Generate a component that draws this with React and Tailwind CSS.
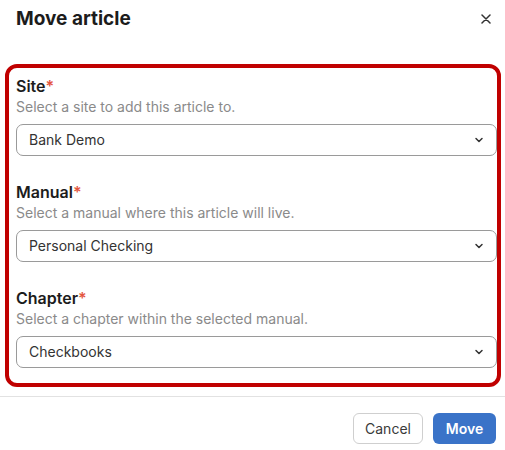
import React, { useState } from "react";

const fields = [
  {
    id: "site",
    label: "Site",
    help: "Select a site to add this article to.",
    value: "Bank Demo",
  },
  {
    id: "manual",
    label: "Manual",
    help: "Select a manual where this article will live.",
    value: "Personal Checking",
  },
  {
    id: "chapter",
    label: "Chapter",
    help: "Select a chapter within the selected manual.",
    value: "Checkbooks",
  },
];

function Chevron() {
  return (
    <svg width="10" height="10" viewBox="0 0 10 10" fill="none">
      <path
        d="M2 3.5 L5 6.5 L8 3.5"
        stroke="#333"
        strokeWidth="1.5"
        strokeLinecap="round"
        strokeLinejoin="round"
      />
    </svg>
  );
}

export default function App() {
  const [values] = useState(
    Object.fromEntries(fields.map((f) => [f.id, f.value]))
  );

  return (
    <div className="w-[505px] h-[450px] bg-white font-['Inter',sans-serif] text-[#1c1c1c] flex flex-col">
      {/* header */}
      <div className="flex items-center justify-between pl-4 pr-[9px] pt-[4px] h-[33px]">
        <h2 className="text-[19px] leading-7 font-bold">Move article</h2>
        <button className="w-5 h-5 flex items-center justify-center">
          <svg width="10" height="10" viewBox="0 0 10 10">
            <path
              d="M1 1 L9 9 M9 1 L1 9"
              stroke="#333"
              strokeWidth="1.5"
              strokeLinecap="round"
            />
          </svg>
        </button>
      </div>

      {/* form */}
      <div className="mt-[31px] ml-[5px] mr-[4px] border-4 border-[#c00000] rounded-[12px] pl-[7px] pr-[0px] pt-[7px] pb-[15px] flex flex-col gap-[25px]">
        {fields.map((f) => (
          <div key={f.id} className="flex flex-col">
            <label className="text-base leading-[22px] font-semibold">
              {f.label}
              <span className="text-[#e4563f]">*</span>
            </label>
            <p className="text-sm leading-5 text-[#8a8a8a]">{f.help}</p>
            <div className="mt-[7px] h-8 border border-[#9a9a9a] rounded-[7px] flex items-center justify-between pl-3 pr-[12px] text-sm text-[#333]">
              <span>{values[f.id]}</span>
              <Chevron />
            </div>
          </div>
        ))}
      </div>

      {/* footer */}
      <div className="mt-[9px] border-t border-[#e2e2e2] flex justify-end gap-[10px] pt-[16px] pr-[9px]">
        <button className="h-[31px] w-[70px] rounded-[6px] border border-[#cfcfcf] text-sm text-[#3a3a3a] bg-white">
          Cancel
        </button>
        <button className="h-[31px] w-[63px] rounded-[6px] bg-[#3a73c8] text-sm font-semibold text-white">
          Move
        </button>
      </div>
    </div>
  );
}
